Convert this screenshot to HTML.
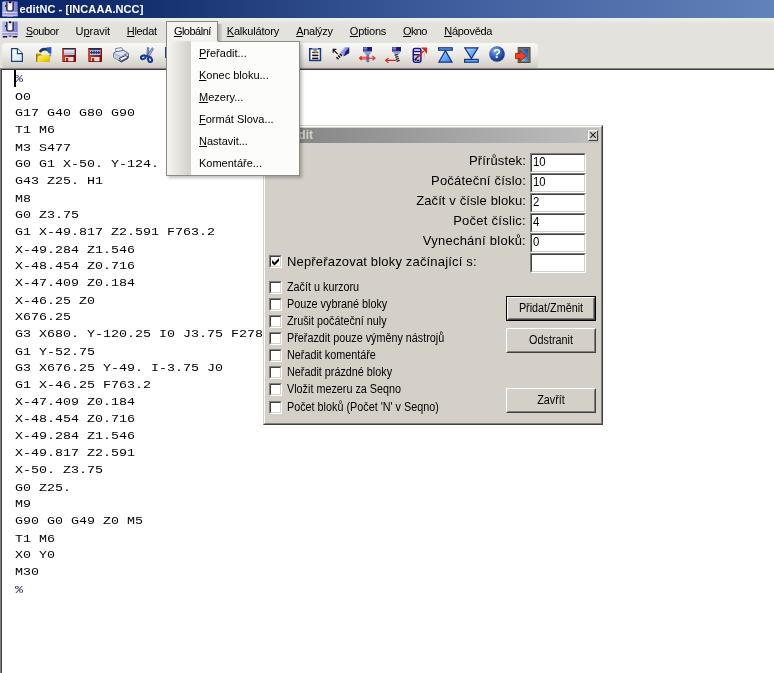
<!DOCTYPE html><html lang="cs"><head><meta charset="utf-8"><title>editNC - [INCAAA.NCC]</title><style>
html,body{margin:0;padding:0}
body{will-change:transform;width:774px;height:673px;overflow:hidden;background:#fff;position:relative;font-family:"Liberation Sans",sans-serif;font-size:11px;color:#000}
.a{position:absolute;white-space:pre}
u{text-decoration:underline;text-underline-offset:1px}
#title{left:0;top:0;width:774px;height:18px;background:linear-gradient(90deg,#0a246a 0%,#15306f 19%,#3f5d9d 58%,#6282ba 100%)}
#title .t{left:19.5px;top:3px;font-weight:bold;font-size:11px;color:#fff;line-height:13px;letter-spacing:0.08px}
#chrome{left:0;top:18px;width:774px;height:50px;background:#e3e2dd}
#chrome .hl{left:0;top:0;width:774px;height:6px;background:linear-gradient(#eaf1e2 0,#e9f0e1 40%,#e9e3e7 60%,#e4e2de 100%)}
#bline1{left:0;top:68px;width:774px;height:1px;background:#86857f}
#bline2{left:0;top:69px;width:774px;height:1px;background:#3c3c3a}
#lb1{left:0;top:69px;width:1px;height:604px;background:#808080}
#lb2{left:1px;top:70px;width:1px;height:603px;background:#404040}
.mi{top:25px;line-height:13px;font-size:11px}
#gsel{left:166px;top:21px;width:52px;height:21px;background:#f3f2ee;border:1px solid #8a8a86;border-bottom:none;box-sizing:border-box}
#gshadow{left:218px;top:24px;width:4px;height:18px;background:linear-gradient(90deg,#a9a8a3,#d6d5d0)}
#tb{left:2px;top:43px;width:536px;height:25px;border-radius:4px 4px 3px 3px;background:linear-gradient(#f8f8f5 0%,#ecebe6 45%,#d3d1c9 92%,#c4c2bb 100%)}
#menu{left:166px;top:41px;width:134px;height:135px;box-sizing:border-box;border:1px solid #8a8a86;background:#fcfcfb;box-shadow:2px 2px 3px rgba(0,0,0,.25)}
#mcover{left:167px;top:41px;width:51px;height:1px;background:linear-gradient(90deg,#f6f5f2 0,#d9d6cf 23px,#f3f2ee 24px)}
#menu .strip{left:0;top:0;width:24px;height:133px;background:linear-gradient(90deg,#f6f5f2,#d3d0c8)}
#menu .it{left:32px;font-size:11px;line-height:13px}
#code{left:15px;top:70.7px;font-family:"Liberation Mono",monospace;font-size:13.33px;line-height:19.65px;color:#000;margin:0;transform:scaleY(.865);transform-origin:0 0}
#caret{left:14px;top:70px;width:2px;height:17px;background:#000}
#dlg{left:263px;top:125px;width:340px;height:300px;box-sizing:border-box;background:#d4d0c8;border:1px solid;border-color:#d4d0c8 #404040 #404040 #d4d0c8}
#dlg .in{left:0;top:0;right:0;bottom:0;border:1px solid;border-color:#fff #808080 #808080 #fff}
#dc{left:0;top:1px;width:338px;height:297px}
#cap{left:3px;top:2px;width:332px;height:15px;background:linear-gradient(90deg,#808080,#c0c0c0)}
#cap .t{right:286px;top:0.4px;font-weight:bold;font-size:12px;line-height:15px;color:#d4d0c8}
#xb{left:321px;top:2px;width:10px;height:11px;box-sizing:border-box;background:#d4d0c8;border:1px solid;border-color:#fff #404040 #404040 #fff}
.lab{font-size:13px;line-height:15px;text-align:right;width:200px;left:62px}
.fld{left:266px;width:56px;height:20px;box-sizing:border-box;background:#fff;border:1px solid;border-color:#808080 #fff #fff #808080}
.fld i{position:absolute;left:0;top:0;right:0;bottom:0;border:1px solid;border-color:#404040 #d4d0c8 #d4d0c8 #404040}
.fld b{position:absolute;left:2.3px;top:2.4px;font-weight:normal;font-size:12px;line-height:13px;transform:scaleX(.95);transform-origin:0 0}
.cb{left:5px;width:13px;height:13px;box-sizing:border-box;background:#fff;border:1px solid;border-color:#808080 #fff #fff #808080}
.cb i{position:absolute;left:0;top:0;right:0;bottom:0;border:1px solid;border-color:#404040 #d4d0c8 #d4d0c8 #404040}
.cl{left:23px;font-size:12px;line-height:13px;transform:scaleX(.9);transform-origin:0 0}
.btn{left:242px;width:90px;box-sizing:border-box;background:#d4d0c8;border:1px solid;border-color:#fff #404040 #404040 #fff;text-align:center;font-size:11px}
.btn i{position:absolute;left:0;top:0;right:0;bottom:0;border:1px solid;border-color:#d4d0c8 #808080 #808080 #d4d0c8}
.btn span{position:absolute;left:0;right:0;line-height:13px;font-size:12px;transform:scaleX(.9)}
</style></head><body>
<div id="title" class="a"><div class="a t">editNC - [INCAAA.NCC]</div><svg class="a" style="left:2px;top:1px" width="16" height="17" viewBox="0 0 16 17"><defs><linearGradient id="ag2" x1="0" y1="0" x2="1" y2="0"><stop offset="0" stop-color="#b9b9f6"/><stop offset=".5" stop-color="#a4a4ee"/><stop offset="1" stop-color="#7c7ccf"/></linearGradient></defs>
<path d="M0.3 1.5Q0.3 0.5 1.3 0.5H14.7Q15.7 0.5 15.7 1.5V15.5H0.3Z" fill="url(#ag2)"/>
<path d="M4 1V8.5Q4 10.5 6 10.5H10Q12 10.5 12 8.5V1H10.6V8.2Q10.6 9.2 9.6 9.2H6.4Q5.4 9.2 5.4 8.2V1Z" fill="#3a3a40"/>
<rect x="6" y="2" width="4" height="7.2" fill="#e9e9ee"/><rect x="7" y="5" width="2.4" height="4" fill="#fff"/>
<rect x="7" y="0.3" width="2" height="1.9" fill="#111"/>
<rect x="3" y="4" width="1.2" height="2" fill="#2a4a2a"/>
<rect x="0.3" y="11.3" width="15.4" height="1.2" fill="#ececff"/>
<rect x="0.3" y="12.5" width="15.4" height="1.1" fill="#6e6eb8"/>
<rect x="0.3" y="13.6" width="15.4" height="1" fill="#dcdcfa"/><rect x="5" y="14.8" width="6" height="1" fill="#9c9ce0"/></svg></div>
<div id="chrome" class="a"><div class="a hl"></div></div>
<div id="tb" class="a"></div>
<svg class="a" style="left:2px;top:21px" width="16" height="17" viewBox="0 0 16 17"><defs><linearGradient id="ag2" x1="0" y1="0" x2="1" y2="0"><stop offset="0" stop-color="#b9b9f6"/><stop offset=".5" stop-color="#a4a4ee"/><stop offset="1" stop-color="#7c7ccf"/></linearGradient></defs>
<path d="M0.3 1.5Q0.3 0.5 1.3 0.5H14.7Q15.7 0.5 15.7 1.5V15.5H0.3Z" fill="url(#ag2)"/>
<path d="M4 1V8.5Q4 10.5 6 10.5H10Q12 10.5 12 8.5V1H10.6V8.2Q10.6 9.2 9.6 9.2H6.4Q5.4 9.2 5.4 8.2V1Z" fill="#3a3a40"/>
<rect x="6" y="2" width="4" height="7.2" fill="#e9e9ee"/><rect x="7" y="5" width="2.4" height="4" fill="#fff"/>
<rect x="7" y="0.3" width="2" height="1.9" fill="#111"/>
<rect x="3" y="4" width="1.2" height="2" fill="#2a4a2a"/>
<rect x="0.3" y="11.3" width="15.4" height="1.2" fill="#ececff"/>
<rect x="0.3" y="12.5" width="15.4" height="1.1" fill="#6e6eb8"/>
<rect x="0.3" y="13.6" width="15.4" height="1" fill="#dcdcfa"/><rect x="0.8" y="15" width="4.4" height="1.5" fill="#15152a"/><rect x="10.8" y="15" width="4.4" height="1.5" fill="#15152a"/><rect x="6.8" y="14.6" width="2.4" height="1.2" fill="#555"/></svg>
<div id="gsel" class="a"></div><div id="gshadow" class="a"></div>
<div class="a mi" style="left:25.7px;letter-spacing:-0.40px"><u>S</u>oubor</div>
<div class="a mi" style="left:75.6px;letter-spacing:-0.06px">U<u>p</u>ravit</div>
<div class="a mi" style="left:126.8px;letter-spacing:-0.32px"><u>H</u>ledat</div>
<div class="a mi" style="left:173.9px;letter-spacing:-0.51px"><u>G</u>lobální</div>
<div class="a mi" style="left:226.8px;letter-spacing:-0.21px"><u>K</u>alkulátory</div>
<div class="a mi" style="left:296.2px;letter-spacing:-0.29px"><u>A</u>nalýzy</div>
<div class="a mi" style="left:349.8px;letter-spacing:-0.24px"><u>O</u>ptions</div>
<div class="a mi" style="left:403.1px;letter-spacing:-0.70px"><u>O</u>kno</div>
<div class="a mi" style="left:444.2px;letter-spacing:-0.27px"><u>N</u>ápověda</div>
<svg class="a" style="left:11px;top:48px" width="12" height="14" viewBox="0 0 12 14"><defs><linearGradient id="ng" x1="0" y1="0" x2="1" y2="1"><stop offset="0" stop-color="#ffffff"/><stop offset="1" stop-color="#cfe6fb"/></linearGradient></defs>
<path d="M0.6 0.6H6.4L11.4 5.6V13.4H0.6Z" fill="url(#ng)" stroke="#1f3f78" stroke-width="1.2"/>
<path d="M6.4 0.6V5.6H11.4" fill="#f4f9ff" stroke="#1f3f78" stroke-width="1.1"/></svg><svg class="a" style="left:36px;top:47px" width="16" height="16" viewBox="0 0 16 16"><defs><linearGradient id="og" x1="0" y1="0" x2="1" y2="1"><stop offset="0" stop-color="#fff78a"/><stop offset=".6" stop-color="#f2d21c"/><stop offset="1" stop-color="#d8a600"/></linearGradient></defs>
<path d="M0.6 6.5H4.5L5.8 8H13.5V15H0.6Z" fill="#caa000"/>
<path d="M0.6 15L2.2 9.2L9 7.4L14.6 8.4L13.2 15Z" fill="url(#og)"/>
<path d="M0.6 6.8V15" stroke="#6e6a20" stroke-width=".9"/>
<path d="M3.8 5Q7 0.4 12.4 3.2" fill="none" stroke="#1c3858" stroke-width="2.7"/>
<path d="M10.2 0.6L15.4 0V6.4L12 5.8Z" fill="#2a5ab8"/>
<path d="M12.8 5.6L15.2 6V9.5L13.6 9Z" fill="#2a5ab8" opacity=".5"/></svg><svg class="a" style="left:62px;top:48px" width="14" height="14" viewBox="0 0 14 14"><defs><linearGradient id="sg62" x1="0" y1="0" x2="0" y2="1"><stop offset="0" stop-color="#ffffff"/><stop offset="1" stop-color="#a9c0e0"/></linearGradient>
<linearGradient id="sr62" x1="0" y1="0" x2="1" y2="0"><stop offset="0" stop-color="#d24a3a"/><stop offset=".5" stop-color="#a81c1c"/><stop offset="1" stop-color="#7c0c10"/></linearGradient></defs>
<rect x="0" y="0" width="14" height="14" rx="0.8" fill="url(#sr62)"/>
<rect x="0.5" y="0" width="13" height="1.1" fill="#4a1c2c"/>
<rect x="2" y="1" width="10.5" height="6" fill="url(#sg62)"/>
<rect x="3" y="9" width="8.5" height="5" fill="#f0dcd6"/>
<rect x="4" y="10" width="2.2" height="4" fill="#a82818"/>
<rect x="1" y="13.2" width="12.5" height=".8" fill="#6a0c0c"/><rect x="2" y="1" width="10.5" height=".9" fill="#5a6c96"/><rect x="2" y="3" width="10.5" height=".8" fill="#c3d0e6"/><rect x="2" y="5" width="10.5" height=".8" fill="#9fb4d6"/></svg><svg class="a" style="left:88px;top:48px" width="14" height="14" viewBox="0 0 14 14"><defs><linearGradient id="sg88" x1="0" y1="0" x2="0" y2="1"><stop offset="0" stop-color="#ffffff"/><stop offset="1" stop-color="#a9c0e0"/></linearGradient>
<linearGradient id="sr88" x1="0" y1="0" x2="1" y2="0"><stop offset="0" stop-color="#d24a3a"/><stop offset=".5" stop-color="#a81c1c"/><stop offset="1" stop-color="#7c0c10"/></linearGradient></defs>
<rect x="0" y="0" width="14" height="14" rx="0.8" fill="url(#sr88)"/>
<rect x="0.5" y="0" width="13" height="1.1" fill="#4a1c2c"/>
<rect x="2" y="1" width="10.5" height="6" fill="url(#sg88)"/>
<rect x="3" y="9" width="8.5" height="5" fill="#f0dcd6"/>
<rect x="4" y="10" width="2.2" height="4" fill="#a82818"/>
<rect x="1" y="13.2" width="12.5" height=".8" fill="#6a0c0c"/><rect x="2" y="1" width="10.5" height="1.4" fill="#2c3c7a"/><rect x="2" y="3.9" width="10.5" height="1" fill="#14308c"/><ellipse cx="3.6" cy="4.4" rx="1" ry="1.5" fill="#14308c"/><ellipse cx="6.0" cy="4.4" rx="1" ry="1.5" fill="#14308c"/><ellipse cx="8.4" cy="4.4" rx="1" ry="1.5" fill="#14308c"/><ellipse cx="10.799999999999999" cy="4.4" rx="1" ry="1.5" fill="#14308c"/></svg><svg class="a" style="left:113px;top:47px" width="16" height="16" viewBox="0 0 16 16"><path d="M3.2 5.2L2.6 1.6L8.6 0.6L10.6 4Z" fill="#fdfdff" stroke="#56648e" stroke-width=".8"/>
<path d="M0.6 6.2L3 4.6L10.8 3.4L15.4 6.4V10.6L8 14.4L0.6 10.4Z" fill="#dfe5f3" stroke="#4a5884" stroke-width=".9"/>
<path d="M0.6 6.4L7.6 9.6L15.4 6.4" fill="none" stroke="#7f8db4" stroke-width=".8"/>
<path d="M0.8 7L7.6 10V14L0.8 10.4Z" fill="#c2cbe2"/>
<path d="M6 11.4L12.6 8.6L15.4 10.2L8.6 13.8Z" fill="#ffffff" stroke="#323c64" stroke-width="1"/>
<path d="M5.6 13.2L8.4 15L15 11.4" fill="none" stroke="#323c64" stroke-width="1"/>
<rect x="11.4" y="6.6" width="2" height="1" fill="#5a6a9a"/></svg><svg class="a" style="left:140px;top:47px" width="14" height="16" viewBox="0 0 14 16"><path d="M7.4 0.4L8.8 0.9L8.6 9.4L6.9 8.6Z" fill="#a9afc0" stroke="#2a4aa0" stroke-width=".7"/>
<path d="M12.2 0.8L13.4 1.8L8.8 10L7.2 8.8Z" fill="#b9bfce" stroke="#2a4aa0" stroke-width=".7"/>
<ellipse cx="3.3" cy="10.3" rx="2.5" ry="1.7" fill="none" stroke="#12379c" stroke-width="2" transform="rotate(-22 3.3 10.3)"/>
<ellipse cx="10" cy="12.6" rx="1.9" ry="2.5" fill="none" stroke="#12379c" stroke-width="2" transform="rotate(-24 10 12.6)"/>
<path d="M5 8.8L8 7.4L9.6 10.6L8 10.2Z" fill="#12379c"/></svg><div class="a" style="left:164.5px;top:47px;width:2px;height:11px;background:#24427e"></div><svg class="a" style="left:309px;top:48px" width="13" height="14" viewBox="0 0 13 14"><rect x="0.75" y="0.75" width="10.7" height="11.7" fill="#fff" stroke="#1a3684" stroke-width="1.5"/>
<rect x="3.2" y="0" width="5.8" height="1.8" fill="#8c9cc0"/><rect x="4.4" y="1.6" width="3.4" height="1" fill="#3a4a7a"/>
<rect x="3.2" y="3.6" width="6.2" height="1.6" fill="#4a3a1a"/><rect x="3.2" y="6.6" width="6.2" height="1.6" fill="#111"/><rect x="3.2" y="9.6" width="6.2" height="1.6" fill="#111"/>
<rect x="6" y="3.6" width="2.4" height="1.2" fill="#b08a30"/></svg><svg class="a" style="left:332px;top:47px" width="18" height="14" viewBox="0 0 18 14"><path d="M1.4 2.8L5.8 7.2" stroke="#111" stroke-width="1.2"/><path d="M0.8 2.4H4.4M1.2 2V5.8" stroke="#111" stroke-width="1.2"/>
<path d="M5 11.8L10.2 6.4" stroke="#111" stroke-width="3" stroke-dasharray="1.4 1"/>
<path d="M8.4 4.8L13 0.2H17.2V6L11.6 9.4Z" fill="#8494e6"/>
<path d="M17.2 0.2V6L11.6 9.4L13.6 4.4Z" fill="#181c74"/>
<path d="M9.4 5L13 1.4" stroke="#c4ccff" stroke-width="1"/></svg><svg class="a" style="left:359px;top:47px" width="17" height="16" viewBox="0 0 17 16"><rect x="4" y="0" width="9" height="4.6" fill="#20287c"/><rect x="4.4" y="0.3" width="3.8" height="2.3" fill="#7482d8"/><rect x="8.8" y="0.3" width="3.8" height="2.3" fill="#18186c"/><rect x="4.4" y="2.9" width="3.8" height="1.7" fill="#4652b0"/>
<path d="M4.6 4.6H12.4L11 7.4H6.2Z" fill="#98a2cc"/><rect x="7.4" y="7.2" width="2.8" height="8" fill="#6672b4"/>
<path d="M0.4 11.2H16M2.6 9.2L0.4 11.2L2.6 13.2M13.4 9L16 11.2L13.4 13.4" stroke="#e02828" stroke-width="1.1" fill="none"/>
<path d="M2 9.8H8.6L10.8 11.2L8.6 12.6H2Z" fill="#e23434"/>
<rect x="3.2" y="10.6" width="4.2" height=".9" fill="#ffc0b0" opacity=".85"/></svg><svg class="a" style="left:385px;top:47px" width="16" height="17" viewBox="0 0 16 17"><rect x="7" y="0" width="9" height="4.6" fill="#20287c"/><rect x="7.4" y="0.3" width="3.8" height="2.3" fill="#7482d8"/><rect x="11.8" y="0.3" width="3.8" height="2.3" fill="#18186c"/><rect x="7.4" y="2.9" width="3.8" height="1.7" fill="#4652b0"/>
<path d="M7.6 4.6H15.4L14.4 7.2H9.4Z" fill="#98a2cc"/>
<path d="M11 7.2L13.4 14.8" stroke="#26262e" stroke-width="3.2" stroke-dasharray="1.3 .8"/>
<path d="M0.6 13.4H11.4M3.4 11L0.6 13.4L3.4 15.8" stroke="#e02020" stroke-width="1.1" fill="none"/></svg><svg class="a" style="left:412px;top:47px" width="15" height="16" viewBox="0 0 15 16"><rect x="1.3" y="1.4" width="7.6" height="13.8" rx="1.6" fill="#f4f6ff" stroke="#14148c" stroke-width="1.5"/>
<path d="M1.2 4.6H8.8M1.2 7.8H8.8" stroke="#14148c" stroke-width="1.5"/>
<rect x="2.4" y="9" width="5.2" height="5" fill="#c4bcd0"/>
<path d="M2.8 12.8L6.6 9" stroke="#3a1a4a" stroke-width="1.3"/><rect x="2.6" y="11.6" width="2" height="2" fill="#2a1a3a"/><rect x="5" y="12.8" width="2.4" height="1.2" fill="#111"/>
<path d="M6.4 9.4L11.6 4" stroke="#e02020" stroke-width="1.6"/><path d="M9 0.6H15V7L13.2 5L11.2 2.6Z" fill="#e02020"/>
<path d="M11.6 5.4H13V10.4H11.6Z" fill="#f4b4b4" opacity=".8"/></svg><svg class="a" style="left:438px;top:47px" width="15" height="16" viewBox="0 0 15 16"><defs><linearGradient id="tg438" x1="0" y1="0" x2="1" y2="1"><stop offset="0" stop-color="#b4dcff"/><stop offset=".5" stop-color="#6cacf2"/><stop offset="1" stop-color="#3c80de"/></linearGradient></defs>
<rect x="0.6" y="0.8" width="13.6" height="2.4" fill="#66a8f0" stroke="#14308c" stroke-width="1.2"/>
<path d="M7.4 3.6L14 15.2H0.8Z" fill="url(#tg438)" stroke="#14308c" stroke-width="1.2" stroke-linejoin="miter"/></svg><svg class="a" style="left:464px;top:47px" width="15" height="16" viewBox="0 0 15 16"><defs><linearGradient id="tg464" x1="0" y1="0" x2="1" y2="1"><stop offset="0" stop-color="#b4dcff"/><stop offset=".5" stop-color="#6cacf2"/><stop offset="1" stop-color="#3c80de"/></linearGradient></defs>
<rect x="0.6" y="12.4" width="13.6" height="2.8" fill="#66a8f0" stroke="#14308c" stroke-width="1.2"/>
<path d="M0.8 0.8H14L7.4 11.6Z" fill="url(#tg464)" stroke="#14308c" stroke-width="1.2" stroke-linejoin="miter"/></svg><svg class="a" style="left:489px;top:46px" width="16" height="16" viewBox="0 0 16 16"><defs><radialGradient id="hg" cx=".38" cy=".3" r=".75"><stop offset="0" stop-color="#86aef2"/><stop offset=".55" stop-color="#2c58bc"/><stop offset="1" stop-color="#142c70"/></radialGradient></defs>
<circle cx="8" cy="8" r="7.8" fill="url(#hg)"/>
<text x="8" y="12.4" text-anchor="middle" font-family="Liberation Sans, sans-serif" font-weight="bold" font-size="13" fill="#fff">?</text></svg><svg class="a" style="left:515px;top:47px" width="16" height="16" viewBox="0 0 16 16"><defs><linearGradient id="eg" x1="0" y1="1" x2="1" y2="0"><stop offset="0" stop-color="#a6e4ff"/><stop offset=".5" stop-color="#3a8ae0"/><stop offset="1" stop-color="#16409c"/></linearGradient></defs>
<rect x="3.2" y="0.6" width="11.8" height="15" fill="#7c6c4c" stroke="#4c4232" stroke-width="1"/>
<path d="M5.2 2.2H13V14.2H5.2Z" fill="url(#eg)"/>
<path d="M0.4 6.4H5V3.6L11.4 9L5 14.4V11.6H0.4Z" fill="#f0401c" stroke="#a01808" stroke-width=".8"/></svg>
<div id="bline1" class="a"></div><div id="bline2" class="a"></div><div id="lb1" class="a"></div><div id="lb2" class="a"></div>
<pre id="code" class="a"><span style="color:#1a1a6e">%</span>
O0
G17 G40 G80 G90
T1 M6
M3 S477
G0 G1 X-50. Y-124.
G43 Z25. H1
M8
G0 Z3.75
G1 X-49.817 Z2.591 F763.2
X-49.284 Z1.546
X-48.454 Z0.716
X-47.409 Z0.184
X-46.25 Z0
X676.25
G3 X680. Y-120.25 I0 J3.75 F278
G1 Y-52.75
G3 X676.25 Y-49. I-3.75 J0
G1 X-46.25 F763.2
X-47.409 Z0.184
X-48.454 Z0.716
X-49.284 Z1.546
X-49.817 Z2.591
X-50. Z3.75
G0 Z25.
M9
G90 G0 G49 Z0 M5
T1 M6
X0 Y0
M30
<span style="color:#1a1a6e">%</span></pre>
<div id="caret" class="a"></div>
<div id="dlg" class="a"><div class="a in"></div><div id="cap" class="a"><div class="a t">Přeřadit</div><div id="xb" class="a"><svg class="a" style="left:1px;top:1px" width="6" height="6" viewBox="0 0 6 6"><path d="M0.3 0.3L5.7 5.7M5.7 0.3L0.3 5.7" stroke="#222" stroke-width="1.15"/></svg></div></div><div id="dc" class="a"><div class="a lab" style="top:26px;letter-spacing:0.15px">Přírůstek:</div><div class="a lab" style="top:46px;letter-spacing:0.2px">Počáteční číslo:</div><div class="a lab" style="top:66px;letter-spacing:0.11px">Začít v čísle bloku:</div><div class="a lab" style="top:86px;letter-spacing:0.27px">Počet číslic:</div><div class="a lab" style="top:106px;letter-spacing:0.25px">Vynechání bloků:</div><div class="a fld" style="top:26px"><i></i><b>10</b></div><div class="a fld" style="top:46px"><i></i><b>10</b></div><div class="a fld" style="top:66px"><i></i><b>2</b></div><div class="a fld" style="top:86px"><i></i><b>4</b></div><div class="a fld" style="top:106px"><i></i><b>0</b></div><div class="a fld" style="top:126px"><i></i><b></b></div><div class="a cb" style="top:128px"><i></i><svg class="a" style="left:2px;top:2px" width="7" height="8" viewBox="0 0 7 8"><path d="M0 2L2.5 4.5L7 0V3L2.5 7.5L0 5Z" fill="#000"/></svg></div><div class="a" style="left:23px;top:127px;font-size:13px;line-height:15px;letter-spacing:0.17px">Nepřeřazovat bloky začínající s:</div><div class="a cb" style="top:154px"><i></i></div><div class="a cl" style="top:154.4px">Začít u kurzoru</div><div class="a cb" style="top:171px"><i></i></div><div class="a cl" style="top:171.4px">Pouze vybrané bloky</div><div class="a cb" style="top:188px"><i></i></div><div class="a cl" style="top:188.4px">Zrušit počáteční nuly</div><div class="a cb" style="top:205px"><i></i></div><div class="a cl" style="top:205.4px">Přeřazdit pouze výměny nástrojů</div><div class="a cb" style="top:222px"><i></i></div><div class="a cl" style="top:222.4px">Neřadit komentáře</div><div class="a cb" style="top:239px"><i></i></div><div class="a cl" style="top:239.4px">Neřadit prázdné bloky</div><div class="a cb" style="top:256px"><i></i></div><div class="a cl" style="top:256.4px">Vložit mezeru za Seqno</div><div class="a cb" style="top:274px"><i></i></div><div class="a cl" style="top:274.4px">Počet bloků (Počet 'N' v Seqno)</div><div class="a btn" style="top:170px;height:23px;left:243px;width:88px;outline:1px solid #000"><i></i><span style="top:4.3px">Přidat/Změnit</span></div><div class="a btn" style="top:201px;height:25px"><i></i><span style="top:5.3px">Odstranit</span></div><div class="a btn" style="top:261px;height:25px"><i></i><span style="top:5.3px">Zavřít</span></div></div></div>
<div id="menu" class="a"><div class="a strip"></div><div class="a it" style="top:5px"><u>P</u>řeřadit...</div><div class="a it" style="top:27px"><u>K</u>onec bloku...</div><div class="a it" style="top:49px"><u>M</u>ezery...</div><div class="a it" style="top:71px"><u>F</u>ormát Slova...</div><div class="a it" style="top:93px"><u>N</u>astavit...</div><div class="a it" style="top:115px">Komentáře...</div></div>
<div id="mcover" class="a"></div>
</body></html>
